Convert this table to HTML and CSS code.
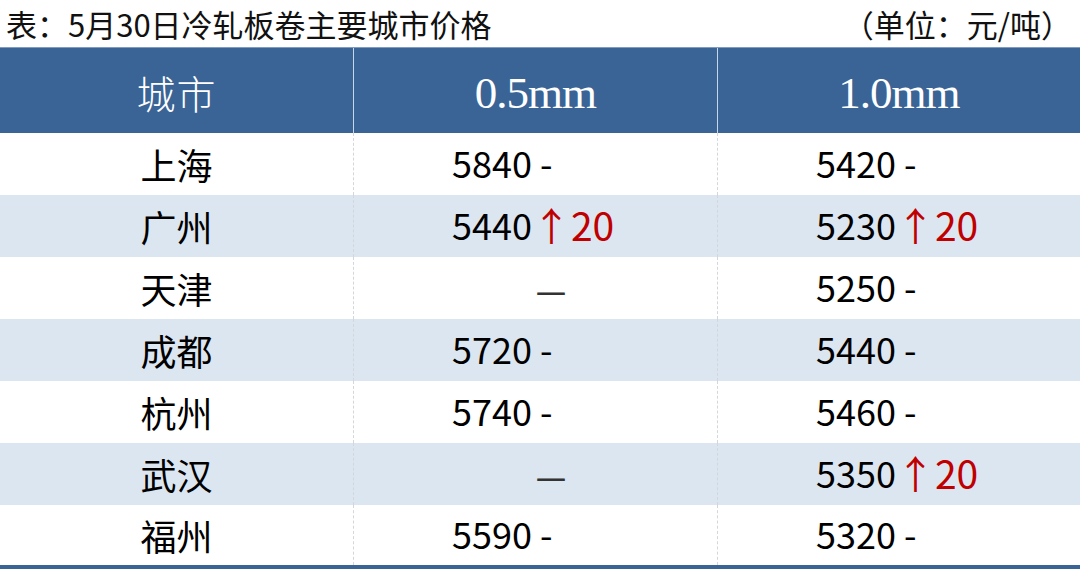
FILE: index.html
```html
<!DOCTYPE html>
<html lang="zh">
<head>
<meta charset="utf-8">
<link rel="stylesheet" href="styles.css">
</head>
<body>
<div class="page">
  <div class="caption">
    <span class="title">表：5月30日冷轧板卷主要城市价格</span>
    <span class="unit">（单位：元/吨）</span>
  </div>
  <div class="table">
    <div class="row head">
      <div class="cell city">城市</div>
      <div class="cell hnum">0.5mm</div>
      <div class="cell hnum">1.0mm</div>
    </div>
    <div class="row">
      <div class="cell city">上海</div>
      <div class="cell val">5840 -</div>
      <div class="cell val">5420 -</div>
    </div>
    <div class="row alt">
      <div class="cell city">广州</div>
      <div class="cell val">5440<span class="up">↑20</span></div>
      <div class="cell val">5230<span class="up">↑20</span></div>
    </div>
    <div class="row">
      <div class="cell city">天津</div>
      <div class="cell val none"><span class="dash">—</span></div>
      <div class="cell val">5250 -</div>
    </div>
    <div class="row alt">
      <div class="cell city">成都</div>
      <div class="cell val">5720 -</div>
      <div class="cell val">5440 -</div>
    </div>
    <div class="row">
      <div class="cell city">杭州</div>
      <div class="cell val">5740 -</div>
      <div class="cell val">5460 -</div>
    </div>
    <div class="row alt">
      <div class="cell city">武汉</div>
      <div class="cell val none"><span class="dash">—</span></div>
      <div class="cell val">5350<span class="up">↑20</span></div>
    </div>
    <div class="row last">
      <div class="cell city">福州</div>
      <div class="cell val">5590 -</div>
      <div class="cell val">5320 -</div>
    </div>
  </div>
</div>
</body>
</html>
```

FILE: styles.css
```css
html, body {
  margin: 0;
  padding: 0;
  background: #ffffff;
}

body {
  width: 1080px;
  height: 577px;
  overflow: hidden;
  font-family: "Noto Sans CJK SC", "Noto Sans", sans-serif;
  color: #000;
}

.page {
  display: flex;
  flex-direction: column;
}

.caption {
  height: 47px;
  display: flex;
  justify-content: space-between;
  align-items: center;
  padding: 0 8px 0 6px;
  font-size: 31px;
  line-height: 47px;
  color: #111;
}

.table {
  display: flex;
  flex-direction: column;
  border-bottom: 4px solid #3a6496;
}

.row {
  display: grid;
  grid-template-columns: 353px 364px 363px;
  height: 62px;
  background: #ffffff;
}

.row.alt {
  background: #dce6f1;
}

.row.last {
  height: 60px;
}

.cell {
  display: flex;
  align-items: center;
  font-size: 36px;
  border-left: 1px dashed #d3d7dc;
}

.cell:first-child {
  border-left: none;
}

.row.head {
  height: 86px;
  background: #3a6496;
  border-top: 1px solid #7f9cc0;
  box-sizing: border-box;
  color: #ffffff;
}

.row.head .cell {
  border-left: 1px solid #c9d6e6;
  justify-content: center;
}

.row.head .cell:first-child {
  border-left: none;
}

.row.head .city {
  font-size: 39px;
  font-weight: 300;
  letter-spacing: 1px;
  padding-top: 2px;
}

.hnum {
  font-family: "Liberation Serif", "Noto Sans CJK SC", serif;
  font-size: 45px;
  letter-spacing: -1px;
  padding-top: 4px;
}

.city {
  justify-content: center;
  padding-top: 0;
}

.val {
  padding-left: 98px;
  padding-bottom: 4px;
}

.up {
  color: #c00000;
  font-size: 39px;
  line-height: 1;
}

.none {
  padding-left: 182px;
  padding-bottom: 0;
}

.dash {
  color: #333;
  font-family: "Noto Sans", sans-serif;
  font-size: 30px;
  transform: translateY(2px);
  display: inline-block;
}
```
